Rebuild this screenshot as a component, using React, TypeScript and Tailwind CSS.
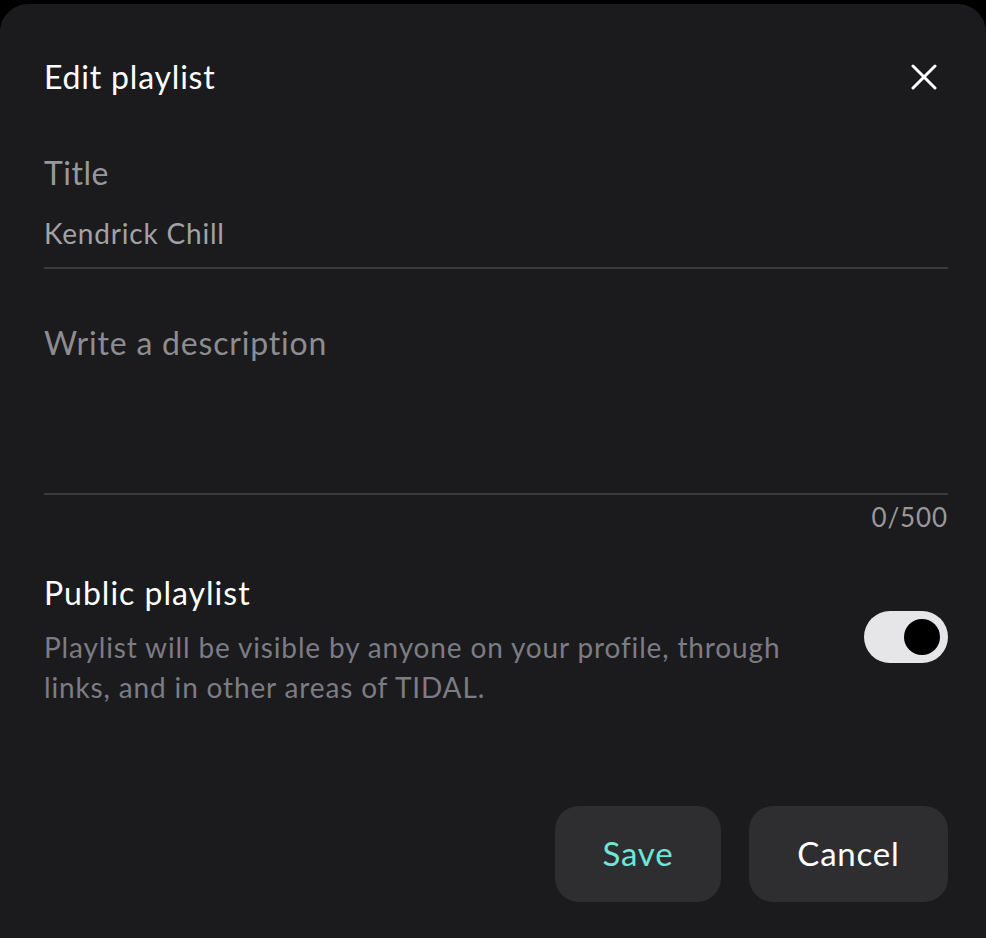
export default function App() {
  return (
    <div className="min-h-screen bg-black pt-[4px]" style={{ fontFamily: "Lato, 'Noto Sans', sans-serif" }}>
      <div className="min-h-[934px] rounded-t-[28px] bg-[#1b1b1d] pl-[44px] pr-[38px] pt-[53px]">
        {/* Header */}
        <div className="flex h-[40px] items-center justify-between">
          <h1 className="text-[32px] leading-[40px] tracking-[0.8px] text-white">Edit playlist</h1>
          <button className="mr-[11px] flex h-[26px] w-[26px] items-center justify-center text-white">
            <svg width="26" height="26" viewBox="0 0 26 26" fill="none" stroke="currentColor" strokeWidth="3" strokeLinecap="round">
              <path d="M2 2L24 24M24 2L2 24" />
            </svg>
          </button>
        </div>

        {/* Title */}
        <div className="mt-[56px]">
          <label className="block text-[32px] leading-[40px] tracking-[0.5px] text-[#98989c]">Title</label>
          <div className="mt-[20px] border-b-2 border-[#3a3a3d] pb-[14px] text-[28px] leading-[40px] tracking-[0.8px] text-[#a2a2a6]">
            Kendrick Chill
          </div>
        </div>

        {/* Description */}
        <div className="mt-[54px] h-[172px] border-b-2 border-[#3a3a3d]">
          <p className="text-[32px] leading-[40px] tracking-[0.8px] text-[#8d8d91]">Write a description</p>
        </div>
        <div className="mt-[7px] text-right text-[26px] leading-[30px] tracking-[0.9px] text-[#98989c]">0/500</div>

        {/* Public toggle */}
        <div className="mt-[41px] flex items-start justify-between">
          <div>
            <p className="text-[32px] leading-[40px] tracking-[1px] text-white">Public playlist</p>
            <p className="mt-[14px] max-w-[760px] text-[28px] leading-[40px] tracking-[0.85px] text-[#7c7c85]">
              Playlist will be visible by anyone on your profile, through links, and in other areas of TIDAL.
            </p>
          </div>
          <div className="mt-[38px] flex h-[52px] w-[84px] shrink-0 items-center justify-end rounded-full bg-[#e6e6e8] px-[8px]">
            <div className="h-[36px] w-[36px] rounded-full bg-black" />
          </div>
        </div>

        {/* Actions */}
        <div className="mt-[99px] flex justify-end gap-[28px]">
          <button className="h-[96px] w-[166px] rounded-[24px] bg-[#2e2e31] text-[33px] tracking-[0.8px] text-[#6ee6d8]">Save</button>
          <button className="h-[96px] w-[199px] rounded-[24px] bg-[#2e2e31] text-[33px] tracking-[0.8px] text-white">Cancel</button>
        </div>
      </div>
    </div>
  );
}
